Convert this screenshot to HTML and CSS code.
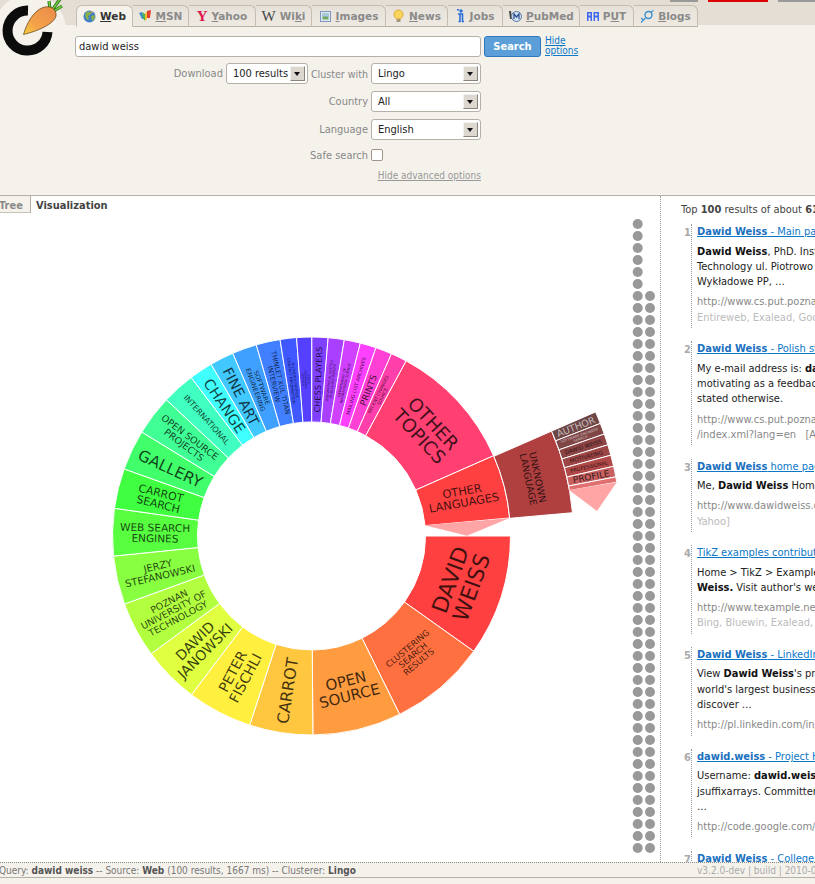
FILE: index.html
```html
<!DOCTYPE html>
<html lang="en">
<head>
  <meta charset="UTF-8">
  <title>Carrot2 Search Results Clustering Engine</title>
  <link rel="stylesheet" href="styles.css">
</head>
<body>
  <div class="page">
    <header class="header">
      <div class="top-links"><i></i><i class="red"></i><i></i></div>
      <svg class="logo" width="75" height="70" viewBox="0 0 75 70">
        <defs>
          <linearGradient id="carrot" x1="0" y1="1" x2="1" y2="0">
            <stop offset="0" stop-color="#f5d040"/>
            <stop offset="0.35" stop-color="#f4a24a"/>
            <stop offset="1" stop-color="#e98a4a"/>
          </linearGradient>
        </defs>
        <circle cx="30" cy="30" r="36" fill="#f5f2ec"/>
        <path d="M28 10.6 A20 20 0 1 0 47.5 32" fill="none" stroke="#0c0c0c" stroke-width="10"/>
        <path d="M50 9 L49 1 M53 9 L60 -1 M54 11 L62 6" fill="none" stroke="#2f6a1c" stroke-width="3.200"/>
        <path d="M50 9 L49 1 M53 9 L60 -1 M54 11 L62 6" fill="none" stroke="#6fd040" stroke-width="1.500"/>
        <path d="M23.500 34.500 C26 25 33 11 43 7.500 C50 5 57 9 56 16 C54 24 38 31 23.500 34.500Z" fill="url(#carrot)" stroke="#5a3a10" stroke-width="0.700"/>
      </svg>
      <div class="header-main">
        <nav class="tabs">
          <a class="tab active">
            <svg width="13" height="13" viewBox="0 0 13 13"><circle cx="6.500" cy="6.500" r="6" fill="#3f7fc8"/><path d="M3 2 L7 1.500 L8 4 L5 6 L6 9 L4 10 L2 6Z M8 6 L12 5 L11.500 9 L9 11Z" fill="#8cb04a"/><path d="M7 1 L10 2 L9 3.500Z" fill="#f0b040"/></svg>
            <span><u>W</u>eb</span>
          </a>
          <a class="tab">
            <svg width="13" height="13" viewBox="0 0 13 13"><path d="M0 3 L3 2 L5 9 L3 9Z" fill="#3a8fd0"/><path d="M3 2 L6 4 L6 11 L4 8Z" fill="#50b050"/><path d="M6 4 L8 1 L8 9 L6 11Z" fill="#f0c030"/><path d="M8 1 L12 0 L11 8 L8 8Z" fill="#e04030"/></svg>
            <span><u>M</u>SN</span>
          </a>
          <a class="tab">
            <span class="glyph yahoo">Y</span>
            <span><u>Y</u>ahoo</span>
          </a>
          <a class="tab">
            <span class="glyph wiki">W</span>
            <span>Wi<u>k</u>i</span>
          </a>
          <a class="tab">
            <svg width="13" height="13" viewBox="0 0 13 13"><rect x="1.500" y="1.500" width="10" height="10" fill="#dfe8f4" stroke="#7f97c0"/><rect x="3.500" y="3.500" width="6" height="6" fill="#6fa860"/><rect x="3.500" y="3.500" width="6" height="3" fill="#a8c8e8"/></svg>
            <span><u>I</u>mages</span>
          </a>
          <a class="tab">
            <svg width="13" height="14" viewBox="0 0 13 14"><circle cx="6.500" cy="5.500" r="4.500" fill="#fcd65c" stroke="#e0a838"/><rect x="4.500" y="10" width="4" height="3" fill="#a89878"/></svg>
            <span><u>N</u>ews</span>
          </a>
          <a class="tab">
            <svg width="10" height="14" viewBox="0 0 10 14"><circle cx="5" cy="2" r="1.700" fill="#2a70d8"/><path d="M1 1 L3 0.500 M2 5 L6.500 5 L6.500 12.500 L8 12.500 M4 5 L4 12.500 L2.500 12.500" fill="none" stroke="#2a70d8" stroke-width="1.600"/></svg>
            <span><u>J</u>obs</span>
          </a>
          <a class="tab">
            <svg width="14" height="13" viewBox="0 0 14 13"><path d="M1 1 L3 1 L4 9 L2 9Z" fill="#444"/><circle cx="8.500" cy="6.500" r="5" fill="#cfe0f0" stroke="#5a7aa0"/><path d="M6 9 L6 4 L8.500 7 L11 4 L11 9" fill="none" stroke="#2a4a90" stroke-width="1.200"/></svg>
            <span><u>P</u>ubMed</span>
          </a>
          <a class="tab">
            <svg width="12" height="9" viewBox="0 0 12 9"><path d="M0 0H5V9H3.500V5.500H1.500V9H0Z M1.500 1.500V3.500H3.500V1.500Z M6.500 0H12V9H10.500V5.500H8V9H6.500Z M8 1.500V3.500H10.500V1.500Z" fill="#3f67f0" fill-rule="evenodd"/></svg>
            <span>P<u>U</u>T</span>
          </a>
          <a class="tab">
            <svg width="14" height="13" viewBox="0 0 14 13"><circle cx="8.500" cy="5" r="3.500" fill="none" stroke="#3a90d0" stroke-width="1.400"/><path d="M5.500 8 L1 12.500 M11 2 L13.500 0.500 M1 8 L3.500 10" fill="none" stroke="#3a90d0" stroke-width="1.200"/></svg>
            <span><u>B</u>logs</span>
          </a>
        </nav>

        <form class="search-row">
          <div class="query">dawid weiss</div>
          <button class="search-btn" type="button">Search</button>
          <a class="hide-link">Hide<br>options</a>
        </form>

        <div class="options">
          <div class="option-row">
            <label>Download</label>
            <div class="select short"><span>100 results</span><i class="arrow"></i></div>
            <label class="tight">Cluster with</label>
            <div class="select"><span>Lingo</span><i class="arrow"></i></div>
          </div>
          <div class="option-row">
            <label>Country</label>
            <div class="select"><span>All</span><i class="arrow"></i></div>
          </div>
          <div class="option-row">
            <label>Language</label>
            <div class="select"><span>English</span><i class="arrow"></i></div>
          </div>
          <div class="option-row safe">
            <label>Safe search</label>
            <div class="check-cell"><i class="checkbox"></i></div>
          </div>
          <div class="advanced"><a>Hide advanced options</a></div>
        </div>
      </div>
    </header>

    <main class="main">
      <section class="viz-panel">
        <div class="view-tabs">
          <span class="view-tab">Tree</span>
          <span class="view-tab current">Visualization</span>
        </div>
        <svg id="circles" class="circles" width="660" height="649" viewBox="0 213 660 649"></svg>
      </section>

      <section class="results">
        <div class="results-head">Top <b>100</b> results of about <b>61,300</b> for dawid weiss</div>

        <article class="result">
          <span class="num">1</span>
          <div class="body">
            <a class="title"><b>Dawid Weiss</b> - Main page</a>
            <p class="snippet"><b>Dawid Weiss</b>, PhD. Institute of Computing Science<br>Technology ul. Piotrowo 2, Poznan<br>Wykładowe PP, …</p>
            <p class="url">http://www.cs.put.poznan.pl/dweiss/xml/index.xml</p>
            <p class="src">Entireweb, Exalead, Google</p>
          </div>
        </article>

        <article class="result">
          <span class="num">2</span>
          <div class="body">
            <a class="title"><b>Dawid Weiss</b> - Polish stemmer</a>
            <p class="snippet">My e-mail address is: <b>dawid.weiss</b><br>motivating as a feedback from users<br>stated otherwise.</p>
            <p class="url">http://www.cs.put.poznan.pl/dweiss/xml/projects</p>
            <p class="src dark">/index.xml?lang=en &nbsp; [Ask]</p>
          </div>
        </article>

        <article class="result">
          <span class="num">3</span>
          <div class="body">
            <a class="title"><b>Dawid Weiss</b> home page</a>
            <p class="snippet">Me, <b>Dawid Weiss</b> Home page</p>
            <p class="url">http://www.dawidweiss.com</p>
            <p class="src">Yahoo]</p>
          </div>
        </article>

        <article class="result">
          <span class="num">4</span>
          <div class="body">
            <a class="title">TikZ examples contributed by</a>
            <p class="snippet">Home &gt; TikZ &gt; Examples &gt; Authors<br><b>Weiss.</b> Visit author's website</p>
            <p class="url">http://www.texample.net/tikz</p>
            <p class="src">Bing, Bluewin, Exalead, Google</p>
          </div>
        </article>

        <article class="result">
          <span class="num">5</span>
          <div class="body">
            <a class="title"><b>Dawid Weiss</b> - LinkedIn</a>
            <p class="snippet">View <b>Dawid Weiss</b>'s professional<br>world's largest business network<br>discover …</p>
            <p class="url">http://pl.linkedin.com/in/dawidweiss</p>
          </div>
        </article>

        <article class="result">
          <span class="num">6</span>
          <div class="body">
            <a class="title"><b>dawid.weiss</b> - Project Hosting</a>
            <p class="snippet">Username: <b>dawid.weiss</b> Projects<br>jsuffixarrays. Committer<br>…</p>
            <p class="url">http://code.google.com/u/dawid.weiss</p>
          </div>
        </article>

        <article class="result">
          <span class="num">7</span>
          <div class="body">
            <a class="title"><b>Dawid Weiss</b> - College</a>
          </div>
        </article>
      </section>
    </main>

    <footer class="footer">
      <div class="status">Query: <b>dawid weiss</b> -- Source: <b>Web</b> (100 results, 1667 ms) -- Clusterer: <b>Lingo</b></div>
      <div class="version">v3.2.0-dev | build | 2010-02-11</div>
    </footer>
  </div>
  <script src="script.js"></script>
</body>
</html>
```

FILE: styles.css
```css
html, body {
  margin: 0;
  padding: 0;
  background: #fff;
}
body {
  font-family: "DejaVu Sans Condensed", "DejaVu Sans", sans-serif;
  font-size: 11px;
  color: #222;
}
.page {
  width: 815px;
  height: 884px;
  overflow: hidden;
  display: flex;
  flex-direction: column;
}

/* header */
.header {
  position: relative;
  height: 195px;
  flex: none;
  display: flex;
  background: linear-gradient(#e4ded5 0, #e4ded5 25px, #f5f2ec 25px);
  border-bottom: 1px solid #b5b1a9;
}
.top-links {
  position: absolute;
  top: 0;
  left: 670px;
  display: flex;
  gap: 10px;
}
.top-links i {
  display: block;
  width: 28px;
  height: 2px;
  background: #999;
}
.top-links i.red {
  width: 60px;
  background: #d00;
}
.top-links i:last-child {
  width: 40px;
}
.logo {
  flex: none;
  display: block;
  overflow: hidden;
}
.header-main {
  width: 700px;
  flex: none;
}
.tabs {
  display: grid;
  grid-template-columns: 57px 56px 67px 56px 74px 62px 55px 77px 54px 64px;
  height: 21px;
  padding-top: 5px;
  margin-left: 1px;
}
.tab {
  display: flex;
  align-items: center;
  justify-content: center;
  gap: 4px;
  height: 20px;
  border: 1px solid #c6bcb0;
  border-bottom: 1px solid #b8b0a4;
  border-left: 0;
  border-radius: 0 6px 0 0;
  background: linear-gradient(#e6e1d8, #eeeae2);
  color: #8a8a8a;
  font-family: "DejaVu Sans", sans-serif;
  font-weight: bold;
  font-size: 10.5px;
}
.tab.active {
  border-left: 1px solid #c6bcb0;
  border-radius: 6px 6px 0 0;
  border-bottom-color: #f5f2ec;
  background: #f5f2ec;
  color: #333;
}
.glyph {
  font-family: "Liberation Serif", serif;
  font-weight: bold;
  font-size: 15px;
  line-height: 13px;
}
.yahoo {
  color: #e0144c;
}
.wiki {
  color: #444;
  font-weight: normal;
}
.search-row {
  display: flex;
  margin: 10px 0 0 0;
  height: 21px;
}
.query {
  width: 398px;
  padding: 0 3px;
  border: 1px solid #b5b1a9;
  border-radius: 3px;
  background: #fff;
  line-height: 19px;
  color: #222;
}
.search-btn {
  width: 57px;
  margin-left: 3px;
  padding: 0;
  border: 1px solid #2f78c0;
  border-radius: 3px;
  background: #5c9fd8;
  color: #fff;
  font-family: inherit;
  font-weight: bold;
  font-size: 11px;
}
.hide-link {
  margin-left: 4px;
  color: #0b77c8;
  text-decoration: underline;
  font-size: 10px;
  line-height: 10px;
}
.options {
  width: 406px;
  margin-top: 6px;
}
.option-row {
  display: flex;
  justify-content: flex-end;
  align-items: center;
  gap: 3px;
  height: 21px;
  margin-bottom: 7px;
  color: #888;
}
.option-row .tight {
  font-size: 10.6px;
}
.select {
  position: relative;
  width: 108px;
  height: 19px;
  border: 1px solid #b5b1a9;
  border-radius: 3px;
  background: #fff;
  color: #222;
  line-height: 19px;
}
.select.short {
  width: 80px;
}
.select span {
  padding-left: 6px;
}
.arrow {
  position: absolute;
  top: 2px;
  right: 2px;
  width: 13px;
  height: 13px;
  background: #dcd8d0;
  border: 1px solid;
  border-color: #f4f2ee #8a8478 #8a8478 #f4f2ee;
}
.arrow::after {
  content: "";
  position: absolute;
  left: 3px;
  top: 5px;
  border: 3.5px solid transparent;
  border-top: 4px solid #111;
  border-bottom: 0;
}
.check-cell {
  width: 110px;
}
.checkbox {
  display: block;
  width: 10px;
  height: 10px;
  border: 1px solid #a09488;
  border-radius: 2px;
  background: #fff;
}
.option-row.safe {
  height: 14px;
  margin: 8px 0 0 0;
}
.advanced {
  margin-top: 8px;
  text-align: right;
  font-size: 10px;
  color: #999;
}
.advanced a {
  text-decoration: underline;
}

/* main area */
.main {
  flex: 1;
  min-height: 0;
  display: flex;
  overflow: hidden;
}
.viz-panel {
  width: 660px;
  flex: none;
  border-right: 1px dotted #999;
}
.view-tabs {
  display: flex;
  height: 17px;
}
.view-tab {
  width: 36px;
  margin-left: -6px;
  padding-left: 5px;
  background: #f5f2ec;
  border-bottom: 1px solid #c6c2ba;
  box-sizing: border-box;
  color: #8a8a8a;
  font-weight: bold;
  line-height: 19px;
}
.view-tab.current {
  width: auto;
  margin: 0;
  padding: 0 4px 0 5px;
  background: #fff;
  border-bottom: 0;
  border-left: 1px solid #b5b1a9;
  color: #444;
}
.circles {
  display: block;
}
.circles .cell {
  stroke: #fff;
  stroke-width: 1;
}
.circles text {
  font-family: "DejaVu Sans", sans-serif;
  fill: #000;
  fill-opacity: 0.75;
  text-anchor: middle;
}
.circles .pale {
  fill: #ddd;
  fill-opacity: 0.8;
}
.circles .dot {
  fill: #999;
}

/* results column */
.results {
  flex: none;
  width: 300px;
  padding: 6px 0 0 20px;
  white-space: nowrap;
  line-height: 15.3px;
}
.results-head {
  color: #444;
  margin-bottom: 7px;
}
.result {
  display: flex;
  margin-bottom: 13.4px;
}
.num {
  width: 10px;
  padding-top: 1px;
  color: #aaa;
  font-weight: bold;
  text-align: right;
}
.body {
  padding: 0 0 3px 5px;
  border-left: 1px dotted #999;
}
.title {
  color: #0b77c8;
  text-decoration: underline;
}
.title b {
  color: #1a70c0;
}
.snippet {
  margin: 4px 0 0;
  color: #222;
}
.snippet b {
  color: #111;
}
.url {
  margin: 5px 0 0;
  color: #888;
}
.src {
  margin: 0;
  color: #bbb;
}
.src.dark {
  color: #888;
}

/* footer */
.footer {
  flex: none;
  height: 22px;
  display: flex;
  justify-content: space-between;
  background: #f5f2ec;
  border-top: 1px dotted #888;
  box-sizing: border-box;
  color: #777;
  font-size: 10px;
  line-height: 15px;
  white-space: nowrap;
  box-shadow: inset 0 -6px 0 #f5f2ec, inset 0 -7px 0 #b5b1a9;
}
.status {
  margin-left: -1px;
}
.status b {
  color: #555;
}
.version {
  width: 118px;
  overflow: hidden;
  color: #aaa;
}
```

FILE: script.js
```js
// foam circle: page coordinates, angles in degrees clockwise from east
const CX = 311.5, CY = 536;
const svgNS = 'http://www.w3.org/2000/svg';
const svg = document.getElementById('circles');

// [from, to, colour, lines, font size, text rotation]
const inner = [
  [0, 35.4, '#ff4040', ['DAVID', 'WEISS'], 22, -70],
  [35.4, 63.7, '#ff7040', ['CLUSTERING', 'SEARCH', 'RESULTS'], 8.5, -40],
  [63.7, 89.6, '#ff9c40', ['OPEN', 'SOURCE'], 15, -14],
  [89.6, 108.1, '#ffc640', ['CARROT'], 16, -81],
  [108.1, 127.1, '#fff040', ['PETER', 'FISCHLI'], 14, -62],
  [127.1, 143.7, '#dfff40', ['DAWID', 'JANOWSKI'], 14, -45],
  [143.7, 160, '#b2ff40', ['POZNAN', 'UNIVERSITY OF', 'TECHNOLOGY'], 9.5, -28],
  [160, 174.2, '#88ff40', ['JERZY', 'STEFANOWSKI'], 10, -13],
  [174.2, 188, '#58ff40', ['WEB SEARCH', 'ENGINES'], 10.5, 1],
  [188, 199.7, '#40ff40', ['CARROT', 'SEARCH'], 11, 14],
  [199.7, 211.5, '#40ff6a', ['GALLERY'], 15.5, 25],
  [211.5, 223.2, '#40ff95', ['OPEN SOURCE', 'PROJECTS'], 9.5, 37],
  [223.2, 232.8, '#40ffc0', ['INTERNATIONAL'], 8, 48],
  [232.8, 239.7, '#40ffff', ['CHANGE'], 14.5, 56],
  [239.7, 246.7, '#40c8ff', ['FINE ART'], 14, 63],
  [246.7, 253.9, '#40a0ff', ['SOFTWARE', 'ENGINEERING'], 6.5, 70],
  [253.9, 260.9, '#4080ff', ['THINLET XUL TITAN', 'INTERVIEW'], 6.7, 77],
  [260.9, 265.7, '#4058ff', ['AUTHORS PROFILE', 'CONTACT INFORMATION'], 3.8, 83],
  [265.7, 270.1, '#5540ff', ['CYCLIC', 'COORDINATE', 'DESCENT'], 2.8, 88],
  [270.1, 274.8, '#8040ff', ['CHESS PLAYERS'], 8.2, -88],
  [274.8, 279.5, '#aa40ff', ['BIOGRAPHICAL SKETCH', 'PUBLISHED PAPERS'], 3.5, -83],
  [279.5, 284.2, '#d040ff', ['DEPARTMENT OF', 'INFORMATION SCIENCE'], 3.5, -78],
  [284.2, 288.9, '#ff40ff', ['MAILING LIST ARCHIVES'], 5, -74],
  [288.9, 293.7, '#ff40d5', ['PRINTS'], 9, -69],
  [293.7, 298.4, '#ff40aa', ['RECENT CHANGES', 'SOURCE'], 4.5, -64],
  [298.4, 336.2, '#ff4070', ['OTHER', 'TOPICS'], 18.5, 47],
  [336.2, 354.8, '#ff4040', ['OTHER', 'LANGUAGES'], 11.4, -10]
];

const outer = [
  [336.4, 338.7, '#6e4646', ['AUTHOR'], 9.5, -21, true],
  [338.7, 340.8, '#804545', ['SOFTWARE ENGINEER', 'SEARCH'], 3.6, -19, true],
  [340.8, 342.9, '#8d4444', ['DAWID WEISS'], 5.5, -17],
  [342.9, 344.9, '#9c4545', ['MOTIVATING'], 5.5, -15],
  [344.9, 347, '#b04848', ['PROFESSIONAL'], 5, -13],
  [347, 349, '#c86060', ['PROFILE'], 9, -11],
  [349, 350, '#e07070', [], 0, 0]
];

function point(angle, r) {
  const a = angle * Math.PI / 180;
  return [CX + r * Math.cos(a), CY + r * Math.sin(a)];
}

function add(tag, attrs) {
  const el = document.createElementNS(svgNS, tag);
  for (const k in attrs) el.setAttribute(k, attrs[k]);
  svg.appendChild(el);
  return el;
}

function cell(from, to, r0, r1, colour) {
  const [ax, ay] = point(from, r0), [bx, by] = point(from, r1);
  const [cx, cy] = point(to, r1), [dx, dy] = point(to, r0);
  const d = `M${ax} ${ay}L${bx} ${by}A${r1} ${r1} 0 0 1 ${cx} ${cy}L${dx} ${dy}A${r0} ${r0} 0 0 0 ${ax} ${ay}Z`;
  add('path', { d: d, fill: colour, class: 'cell' });
}

function label(angle, r, lines, size, rot, pale) {
  const [x, y] = point(angle, r);
  const text = add('text', {
    transform: `translate(${x} ${y}) rotate(${rot})`,
    'font-size': size
  });
  if (pale) text.setAttribute('class', 'pale');
  const lead = size * 1.02;
  lines.forEach((line, i) => {
    const span = document.createElementNS(svgNS, 'tspan');
    span.setAttribute('x', 0);
    span.setAttribute('y', (i - (lines.length - 1) / 2) * lead + size * 0.36);
    span.textContent = line;
    text.appendChild(span);
  });
}

function ring(list, r0, r1) {
  list.forEach(([from, to, colour]) => cell(from, to, r0, r1, colour));
  list.forEach(([from, to, , lines, size, rot, pale]) => {
    if (lines.length) label((from + to) / 2, (r0 + r1) / 2, lines, size, rot, pale);
  });
}

ring(inner, 114, 199);
cell(336.4, 354.9, 199, 262, '#b04040');
label(345.4, 229, ['UNKNOWN', 'LANGUAGE'], 9.5, 78);
ring(outer, 262, 310);

// pale wedges mark the folded children
add('polygon', { points: '424.7,525.3 509,518.3 467,535.7', fill: '#ffa5a5' });
add('polygon', { points: '569,490 616.7,482.3 597,511', fill: '#ffa5a5' });

// dots for documents in no cluster
for (let k = 0; k <= 52; k++) {
  add('circle', { cx: 637.7, cy: 224 + k * 12, r: 5, class: 'dot' });
  if (k >= 6) add('circle', { cx: 650, cy: 224 + k * 12, r: 5, class: 'dot' });
}
```
